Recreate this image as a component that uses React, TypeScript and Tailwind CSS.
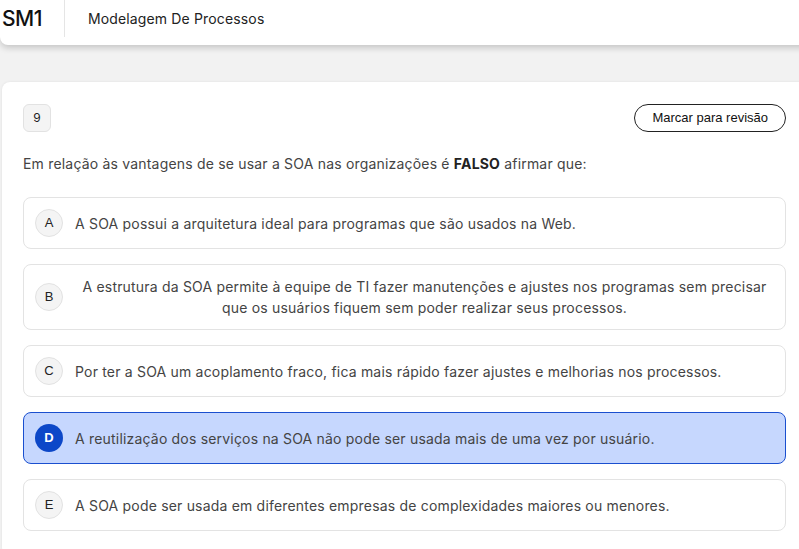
import React from 'react'

interface Option {
  id: string
  text: string
  selected?: boolean
}

const options: Option[] = [
  { id: 'A', text: 'A SOA possui a arquitetura ideal para programas que são usados na Web.' },
  {
    id: 'B',
    text: 'A estrutura da SOA permite à equipe de TI fazer manutenções e ajustes nos programas sem precisar que os usuários fiquem sem poder realizar seus processos.'
  },
  { id: 'C', text: 'Por ter a SOA um acoplamento fraco, fica mais rápido fazer ajustes e melhorias nos processos.' },
  { id: 'D', text: 'A reutilização dos serviços na SOA não pode ser usada mais de uma vez por usuário.', selected: true },
  { id: 'E', text: 'A SOA pode ser usada em diferentes empresas de complexidades maiores ou menores.' }
]

export default function App() {
  return (
    <div
      className="w-[799px] h-[549px] overflow-hidden bg-[#f2f2f2]"
      style={{ fontFamily: 'Inter, "Liberation Sans", sans-serif' }}
    >
      {/* Header */}
      <header className="w-[830px] h-[45px] bg-white rounded-bl-lg shadow-[0_3px_6px_rgba(0,0,0,0.18)]">
        <div className="flex items-center h-[37px]">
          <span className="pl-[2px] pr-[22px] text-[21px] font-medium text-[#111] tracking-tight">SM1</span>
          <div className="h-[37px] border-l border-[#e5e5e5]" />
          <span className="pl-[23px] text-[14px] text-[#222] tracking-[0.15px]">Modelagem De Processos</span>
        </div>
      </header>

      {/* Question card */}
      <main className="ml-[2px] mt-[37px] w-[825px] bg-white rounded-lg shadow-[0_0_3px_rgba(0,0,0,0.08)] pt-[22px] pl-[21px] pr-[41px] pb-6">
        <div className="flex items-center justify-between">
          <div className="w-[28px] h-[28px] flex items-center justify-center rounded-md bg-[#f4f4f4] border border-[#e2e2e2] text-[12px] text-[#222]">
            9
          </div>
          <button
            className="h-[28px] px-[17px] rounded-full border border-[#222] text-[13px] text-[#111] bg-white"
            style={{ fontFamily: '"Liberation Sans", Arial, sans-serif' }}
          >
            Marcar para revisão
          </button>
        </div>

        <p className="mt-[22px] text-[14px] leading-5 text-[#444] tracking-[0.19px]">
          Em relação às vantagens de se usar a SOA nas organizações é <strong className="font-bold text-[#222]">FALSO</strong> afirmar que:
        </p>

        <div className="mt-[23px] flex flex-col gap-[15px]">
          {options.map((opt) => (
            <div
              key={opt.id}
              className={`flex items-center gap-[12px] px-[11px] py-[11px] rounded-lg border ${
                opt.selected ? 'bg-[#c6d7fe] border-[#1a4fcf]' : 'bg-white border-[#e3e3e3]'
              }`}
            >
              <div
                className={`shrink-0 w-[28px] h-[28px] rounded-full flex items-center justify-center text-[13px] ${
                  opt.selected
                    ? 'bg-[#0c47c8] text-white font-semibold'
                    : 'bg-[#f4f4f4] border border-[#e2e2e2] text-[#222]'
                }`}
                style={{ fontFamily: '"Liberation Sans", Arial, sans-serif' }}
              >
                {opt.id}
              </div>
              <span className="text-center text-[14px] leading-[21px] text-[#444] tracking-[0.19px]">{opt.text}</span>
            </div>
          ))}
        </div>
      </main>
    </div>
  )
}
